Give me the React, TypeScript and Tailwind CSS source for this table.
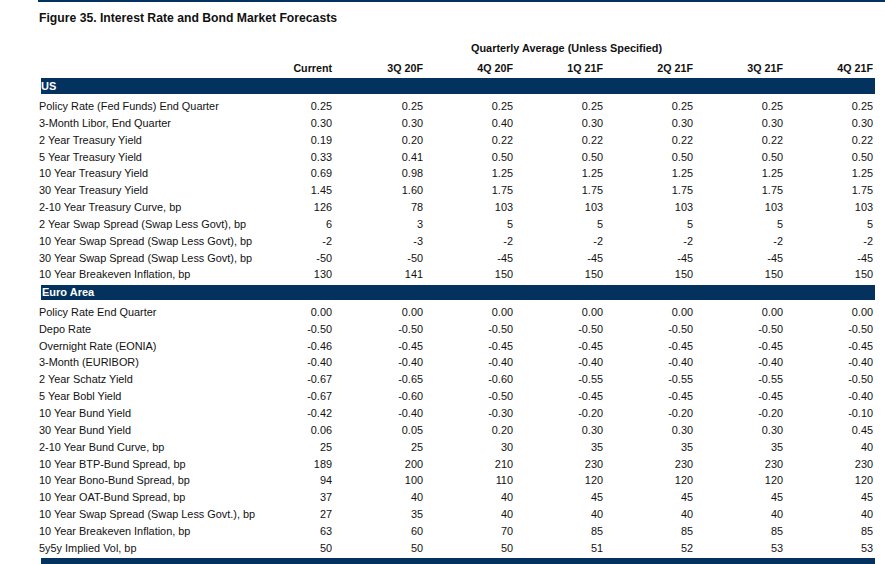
type Row = [string, string[]];

const COLUMNS = ['Current', '3Q 20F', '4Q 20F', '1Q 21F', '2Q 21F', '3Q 21F', '4Q 21F'];

const US_ROWS: Row[] = [
    ['Policy Rate (Fed Funds) End Quarter', ['0.25', '0.25', '0.25', '0.25', '0.25', '0.25', '0.25']],
    ['3-Month Libor, End Quarter', ['0.30', '0.30', '0.40', '0.30', '0.30', '0.30', '0.30']],
    ['2 Year Treasury Yield', ['0.19', '0.20', '0.22', '0.22', '0.22', '0.22', '0.22']],
    ['5 Year Treasury Yield', ['0.33', '0.41', '0.50', '0.50', '0.50', '0.50', '0.50']],
    ['10 Year Treasury Yield', ['0.69', '0.98', '1.25', '1.25', '1.25', '1.25', '1.25']],
    ['30 Year Treasury Yield', ['1.45', '1.60', '1.75', '1.75', '1.75', '1.75', '1.75']],
    ['2-10 Year Treasury Curve, bp', ['126', '78', '103', '103', '103', '103', '103']],
    ['2 Year Swap Spread (Swap Less Govt), bp', ['6', '3', '5', '5', '5', '5', '5']],
    ['10 Year Swap Spread (Swap Less Govt), bp', ['-2', '-3', '-2', '-2', '-2', '-2', '-2']],
    ['30 Year Swap Spread (Swap Less Govt), bp', ['-50', '-50', '-45', '-45', '-45', '-45', '-45']],
    ['10 Year Breakeven Inflation, bp', ['130', '141', '150', '150', '150', '150', '150']],
];

const EURO_ROWS: Row[] = [
    ['Policy Rate End Quarter', ['0.00', '0.00', '0.00', '0.00', '0.00', '0.00', '0.00']],
    ['Depo Rate', ['-0.50', '-0.50', '-0.50', '-0.50', '-0.50', '-0.50', '-0.50']],
    ['Overnight Rate (EONIA)', ['-0.46', '-0.45', '-0.45', '-0.45', '-0.45', '-0.45', '-0.45']],
    ['3-Month (EURIBOR)', ['-0.40', '-0.40', '-0.40', '-0.40', '-0.40', '-0.40', '-0.40']],
    ['2 Year Schatz Yield', ['-0.67', '-0.65', '-0.60', '-0.55', '-0.55', '-0.55', '-0.50']],
    ['5 Year Bobl Yield', ['-0.67', '-0.60', '-0.50', '-0.45', '-0.45', '-0.45', '-0.40']],
    ['10 Year Bund Yield', ['-0.42', '-0.40', '-0.30', '-0.20', '-0.20', '-0.20', '-0.10']],
    ['30 Year Bund Yield', ['0.06', '0.05', '0.20', '0.30', '0.30', '0.30', '0.45']],
    ['2-10 Year Bund Curve, bp', ['25', '25', '30', '35', '35', '35', '40']],
    ['10 Year BTP-Bund Spread, bp', ['189', '200', '210', '230', '230', '230', '230']],
    ['10 Year Bono-Bund Spread, bp', ['94', '100', '110', '120', '120', '120', '120']],
    ['10 Year OAT-Bund Spread, bp', ['37', '40', '40', '45', '45', '45', '45']],
    ['10 Year Swap Spread (Swap Less Govt.), bp', ['27', '35', '40', '40', '40', '40', '40']],
    ['10 Year Breakeven Inflation, bp', ['63', '60', '70', '85', '85', '85', '85']],
    ['5y5y Implied Vol, bp', ['50', '50', '50', '51', '52', '53', '53']],
];

const GRID = 'grid grid-cols-[204px_89px_91px_90px_90px_90px_90px_90px] pl-[39px]';

function Band({label, className}: {label: string; className: string}) {
    return (
        <div className={`ml-[41px] w-[834px] bg-[#03325f] text-[11px] font-bold text-white ${className}`}>
            {label}
        </div>
    );
}

function DataRows({rows}: {rows: Row[]}) {
    return (
        <div>
            {rows.map(([label, values]) => (
                <div className={`${GRID} h-[16.85px] items-center text-[10.9px] leading-[16.85px]`} key={label}>
                    <span className="whitespace-nowrap">{label}</span>
                    {values.map((v, i) => (
                        <span className="text-right" key={i}>
                            {v}
                        </span>
                    ))}
                </div>
            ))}
        </div>
    );
}

export default function App() {
    return (
        <div className="h-[564px] w-[885px] overflow-hidden bg-white font-['Liberation_Sans',Arial,sans-serif] text-[#111]">
            <div className="ml-[38px] h-[2px] bg-[#03325f]" />

            <h1 className="mt-[8px] h-[16px] pl-[39px] text-[12.2px] font-bold leading-[16px] whitespace-nowrap">
                Figure 35. Interest Rate and Bond Market Forecasts
            </h1>

            <div className="mt-[14px] h-[16px] pl-[471px] text-[10.9px] font-bold leading-[16px] whitespace-nowrap">
                Quarterly Average (Unless Specified)
            </div>

            <div className={`${GRID} mt-[4px] h-[16px] text-[10.7px] font-bold leading-[16px]`}>
                <span />
                {COLUMNS.map(c => (
                    <span className="text-right" key={c}>
                        {c}
                    </span>
                ))}
            </div>

            <Band className="mt-[2px] h-[16px] leading-[16px]" label="US" />
            <div className="mt-[4px]">
                <DataRows rows={US_ROWS} />
            </div>

            <Band className="mt-[1.65px] h-[15px] pl-px leading-[15px]" label="Euro Area" />
            <div className="mt-[4px]">
                <DataRows rows={EURO_ROWS} />
            </div>

            <div className="ml-[41px] mt-[1.25px] h-[16px] w-[834px] bg-[#03325f]" />
        </div>
    );
}
